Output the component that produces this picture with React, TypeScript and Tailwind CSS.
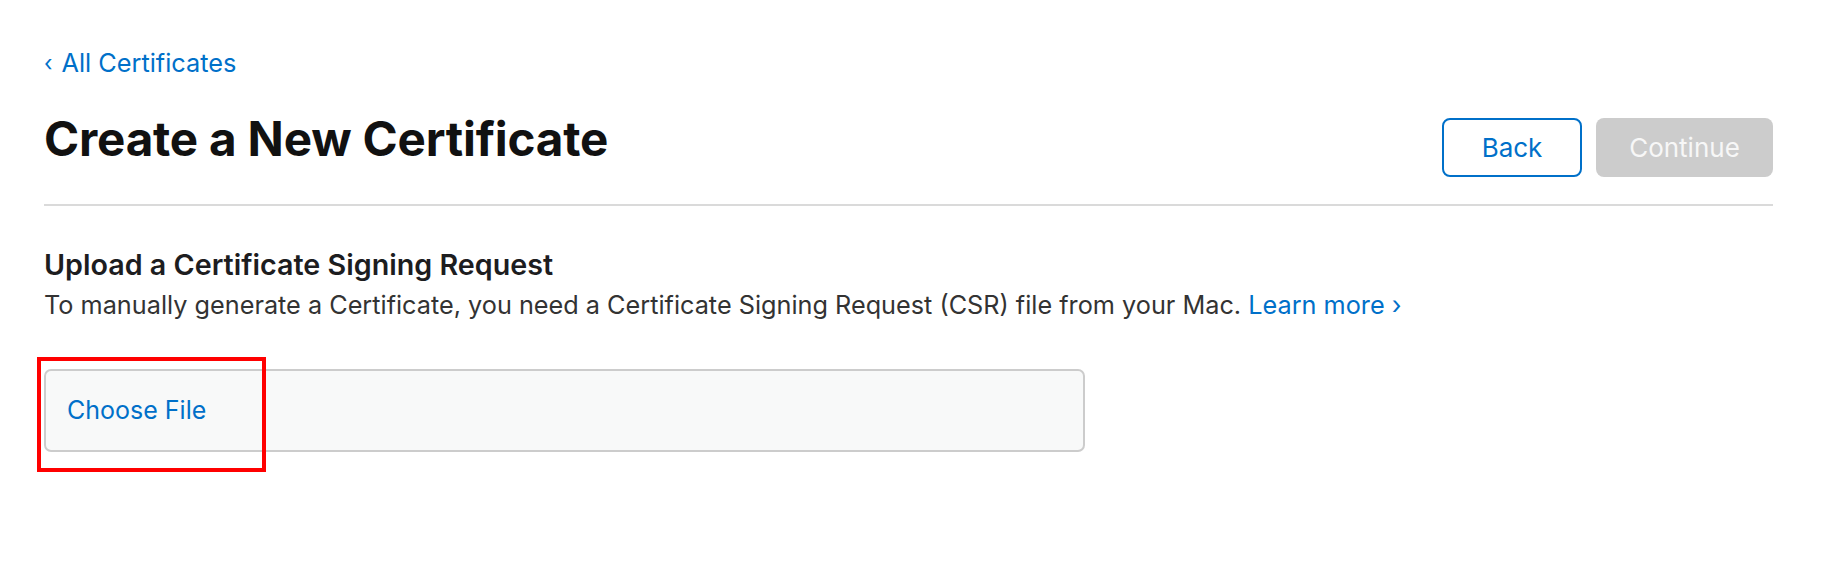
import React from "react";

export default function App() {
  return (
    <div
      className="w-[1822px] h-[580px] bg-white px-[44px] pt-[48px]"
      style={{ fontFamily: "Inter, 'Noto Sans', sans-serif" }}
    >
      <div className="w-[1729px]">
        <a className="flex items-center text-[25.3px] leading-[30px] text-[#0070c9]">
          <span className="mr-[9px] text-[22px]">‹</span>
          <span>All Certificates</span>
        </a>

        <div className="mt-[33px] flex items-start justify-between">
          <h1 className="text-[47.6px] leading-[56px] font-bold text-[#111111] tracking-[-0.2px]">
            Create a New Certificate
          </h1>
          <div className="mt-[7px] flex gap-[14px]">
            <button className="w-[140px] h-[59px] rounded-[8px] border-2 border-[#0070c9] bg-white text-[26px] text-[#0070c9]">
              Back
            </button>
            <button className="w-[177px] h-[59px] rounded-[8px] bg-[#cccccc] text-[26px] text-[#f7f7f7]">
              Continue
            </button>
          </div>
        </div>

        <div className="mt-[27px] h-[2px] bg-[#dadada]" />

        <h2 className="mt-[42px] text-[28.7px] leading-[34px] font-semibold text-[#1d1d1f]">
          Upload a Certificate Signing Request
        </h2>
        <p className="mt-[8px] text-[25.25px] leading-[30px] text-[#333333]">
          To manually generate a Certificate, you need a Certificate Signing Request (CSR) file from your Mac.{" "}
          <a className="text-[#0070c9]">Learn more ›</a>
        </p>

        <div className="relative mt-[49px] w-[1041px]">
          <div className="flex h-[83px] items-center rounded-[7px] border-2 border-[#cccccc] bg-[#f8f9f9] pl-[21px]">
            <span className="text-[25px] text-[#0070c9]">Choose File</span>
          </div>
          <div className="absolute left-[-7px] top-[-12px] h-[115px] w-[229px] border-[4px] border-[#ff0000]" />
        </div>
      </div>
    </div>
  );
}
